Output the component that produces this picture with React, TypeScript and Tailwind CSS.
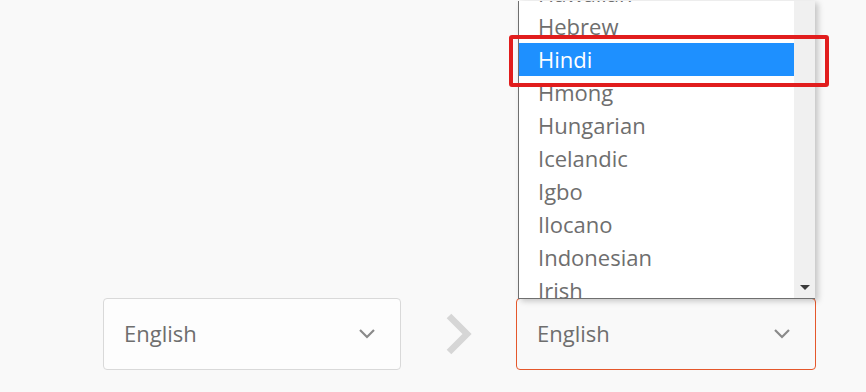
const languages = [
  'Hawaiian',
  'Hebrew',
  'Hindi',
  'Hmong',
  'Hungarian',
  'Icelandic',
  'Igbo',
  'Ilocano',
  'Indonesian',
  'Irish',
]

const SELECTED = 'Hindi'

function ChevronDown() {
  return (
    <svg width="18" height="11" viewBox="0 0 18 11" fill="none" aria-hidden="true">
      <path d="M2 2l7 7 7-7" stroke="#8a8a8a" strokeWidth="2.2" />
    </svg>
  )
}

function LanguageList() {
  return (
    <div className="absolute bottom-full left-[1px] right-0 mb-0 h-[298px] overflow-hidden border-b border-l border-[#6f6f6f] bg-white shadow-[3px_2px_6px_rgba(0,0,0,0.22)]">
      <div className="-mt-[24px] mr-[21px] flex flex-col">
        {languages.map((lang) => (
          <div
            key={lang}
            className={
              lang === SELECTED
                ? 'flex h-[33px] items-center bg-[#1e90ff] pb-[1px] pl-[19px] text-white'
                : 'flex h-[33px] items-center pb-[1px] pl-[19px] text-[#6e6e6e]'
            }
          >
            {lang}
          </div>
        ))}
      </div>
      <div className="absolute right-0 top-0 bottom-0 flex w-[21px] flex-col justify-end bg-[#f0f0f0] pb-[8px]">
        <div className="mx-auto h-0 w-0 border-x-[5px] border-t-[5px] border-x-transparent border-t-[#3a3a3a]" />
      </div>
    </div>
  )
}

export default function App() {
  return (
    <div
      className="relative flex h-[392px] w-[866px] flex-col justify-end overflow-hidden bg-[#f9f9f9] pb-[22px] text-[22px]"
      style={{ fontFamily: '"Open Sans", "Noto Sans", sans-serif' }}
    >
      <div className="flex items-center pl-[103px]">
        <div className="flex h-[72px] w-[298px] items-center justify-between rounded-[4px] border border-[#d9d9d9] bg-[#fdfdfd] pb-[2px] pl-[20px] pr-[24px] text-[#6e6e6e]">
          <span>English</span>
          <ChevronDown />
        </div>

        <div className="flex w-[115px] justify-center">
          <svg width="28" height="42" viewBox="0 0 28 42" fill="none" aria-hidden="true" className="ml-[1px]">
            <path d="M4 3l18 18-18 18" stroke="#d6d6d6" strokeWidth="6.5" />
          </svg>
        </div>

        <div className="relative flex h-[72px] w-[300px] items-center justify-between rounded-[4px] border border-[#e5582c] pb-[2px] pl-[20px] pr-[24px] text-[#6e6e6e]">
          <LanguageList />
          <span>English</span>
          <ChevronDown />
        </div>
      </div>

      <div className="pointer-events-none absolute left-[509px] top-[35px] h-[52px] w-[320px] rounded-[3px] border-[4px] border-[#e11d1d]" />
    </div>
  )
}
